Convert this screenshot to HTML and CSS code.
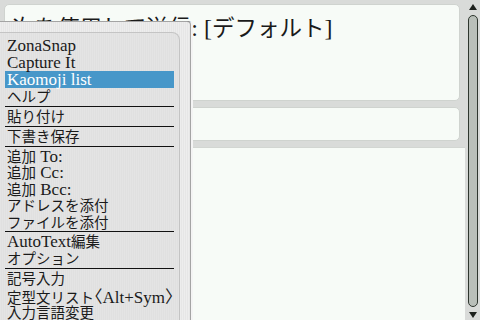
FILE: index.html
```html
<!DOCTYPE html>
<html lang="ja">
<head>
  <meta charset="UTF-8" />
  <title>メッセージ作成</title>
  <link rel="stylesheet" href="styles.css">
</head>
<body>
  <div class="screen">
    <div class="compose">
      <div class="field from"><span class="ja">次を使用して送信</span>: [<span class="ja">デフォルト</span>]</div>
      <div class="field subject"></div>
      <div class="message"></div>
    </div>

    <div class="scrollbar">
      <span class="arrow up"></span>
      <span class="track"></span>
      <span class="arrow down"></span>
    </div>

    <div class="menu">
      <div class="panel">
        <div class="item">ZonaSnap</div>
        <div class="item">Capture It</div>
        <div class="item selected">Kaomoji list</div>
        <div class="item"><span class="ja">ヘルプ</span></div>
        <div class="sep"></div>
        <div class="item"><span class="ja">貼り付け</span></div>
        <div class="sep"></div>
        <div class="item"><span class="ja">下書き保存</span></div>
        <div class="sep"></div>
        <div class="item compact"><span class="ja">追加</span> To:</div>
        <div class="item compact"><span class="ja">追加</span> Cc:</div>
        <div class="item compact"><span class="ja">追加</span> Bcc:</div>
        <div class="item compact"><span class="ja">アドレスを添付</span></div>
        <div class="item compact"><span class="ja">ファイルを添付</span></div>
        <div class="sep"></div>
        <div class="item">AutoText<span class="ja">編集</span></div>
        <div class="item"><span class="ja">オプション</span></div>
        <div class="sep"></div>
        <div class="item"><span class="ja">記号入力</span></div>
        <div class="item"><span class="ja">定型文リスト</span><span class="br">〈</span>Alt+Sym<span class="br">〉</span></div>
        <div class="item"><span class="ja">入力言語変更</span></div>
      </div>
    </div>
  </div>
</body>
</html>
```

FILE: styles.css
```css
body {
  margin: 0;
  background: #d9dbd9;
  font-family: 'Liberation Serif', 'Noto Sans CJK JP', serif;
  color: #1a1a1a;
}

.screen {
  position: relative;
  display: flex;
  width: 480px;
  height: 320px;
  overflow: hidden;
}

.ja {
  font-family: 'Noto Sans CJK JP', sans-serif;
}

/* compose area */
.compose {
  display: flex;
  flex-direction: column;
  width: 465px;
}

.field {
  margin: 4px 5px 0 4px;
  background: #f7fbf7;
  border: 1px solid #cfd3cf;
  border-radius: 5px;
}

.from {
  height: 97px;
  padding: 9px 7px 0;
  font-size: 24px;
  line-height: 28px;
  box-sizing: border-box;
}

.from .ja {
  font-size: 22.5px;
  line-height: 1;
}

.subject {
  height: 34px;
  margin-top: 6px;
  box-sizing: border-box;
}

.message {
  flex: 1;
  margin-top: 6px;
  background: #f7fbf7;
  border-top: 1px solid #d2d6d2;
}

/* scrollbar */
.scrollbar {
  display: flex;
  flex-direction: column;
  align-items: center;
  width: 15px;
  padding-top: 4px;
}

.arrow {
  width: 0;
  height: 0;
  border-left: 4px solid transparent;
  border-right: 4px solid transparent;
}

.arrow.up {
  border-bottom: 6px solid #1e221e;
}

.arrow.down {
  border-top: 6px solid #1e221e;
  margin-top: 5px;
}

.track {
  width: 8px;
  height: 290px;
  margin-top: 5px;
  background: #b9bfb9;
  border: 1px solid #2e362e;
  border-radius: 5px;
}

/* popup menu */
.menu {
  position: absolute;
  left: 0;
  top: 21px;
  width: 190px;
  height: 310px;
  padding-top: 10px;
  background: repeating-linear-gradient(90deg, #ededed 0 1px, #e6e6e6 1px 2px);
  border: 1px solid #a4a4a4;
  border-left: none;
  border-radius: 0 4px 0 0;
  box-shadow: 2px 0 0 #f4f4f4;
}

.panel {
  width: 180px;
  height: 100%;
  padding-top: 4px;
  box-sizing: border-box;
  background: repeating-linear-gradient(90deg, #e4e4e4 0 1px, #e0e0e0 1px 2px);
  border: 1px solid #c4c4c4;
  border-left: none;
  border-radius: 0 8px 0 0;
}

.item {
  height: 17px;
  margin: 0 5px;
  padding-left: 2px;
  font-size: 17px;
  line-height: 17px;
  white-space: nowrap;
}

.item.compact {
  height: 16.4px;
}

.item .ja {
  font-size: 14.5px;
  line-height: 1;
}

.item .br {
  font-family: 'Noto Sans CJK JP', sans-serif;
  font-size: 17px;
  line-height: 1;
  font-feature-settings: "halt";
}

.item.selected {
  background: #4797c9;
  color: #ffffff;
}

.sep {
  height: 1px;
  margin: 1px 5px;
  background: #111111;
}
```
